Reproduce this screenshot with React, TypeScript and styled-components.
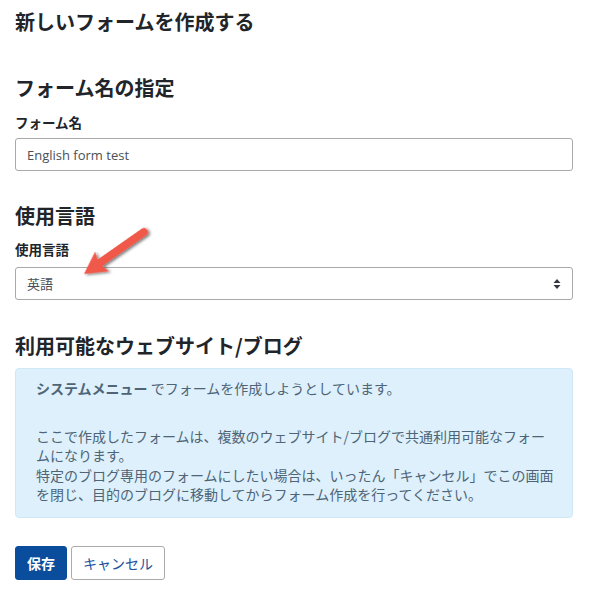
import React from "react";
import styled, { createGlobalStyle } from "styled-components";

const GlobalStyle = createGlobalStyle`
  body {
    margin: 0;
    background: #fff;
    font-family: "Noto Sans CJK JP", "Noto Sans", sans-serif;
    color: #212529;
  }
`;

const Page = styled.div`
  position: relative;
  padding: 10px 18px 20px 15px;
`;

const Title = styled.h1`
  margin: 0;
  font-size: 20px;
  line-height: 24px;
  font-weight: 700;
`;

const Section = styled.section<{ $top: number }>`
  margin-top: ${({ $top }) => $top}px;
`;

const Heading = styled.h2`
  margin: 0;
  font-size: 20px;
  line-height: 24px;
  font-weight: 700;
`;

const Label = styled.label<{ $top: number; $bottom: number }>`
  display: block;
  margin: ${({ $top }) => $top}px 0 ${({ $bottom }) => $bottom}px;
  font-size: 13.5px;
  line-height: 20px;
  font-weight: 700;
`;

const Field = styled.div`
  box-sizing: border-box;
  height: 33px;
  display: flex;
  align-items: center;
  justify-content: space-between;
  padding: 0 11px;
  border: 1px solid #a9a9a9;
  border-radius: 3px;
  font-size: 13px;
  color: #495057;
  font-family: "Open Sans", "Noto Sans CJK JP", sans-serif;
`;

const Alert = styled.div`
  margin-top: 10px;
  box-sizing: border-box;
  padding: 10px 14px 12px 20px;
  background: #ddf0fb;
  border: 1px solid #cfe8f6;
  border-radius: 4px;
  color: #4e6477;
  font-size: 14px;
  line-height: 19.5px;

  p {
    margin: 0;
  }

  p + p {
    margin-top: 28px;
  }

  strong {
    font-weight: 700;
  }
`;

const Line = styled.span`
  display: block;
  white-space: nowrap;
`;

const Actions = styled.div`
  margin-top: 28px;
  display: flex;
  gap: 4px;
`;

const Button = styled.button<{ $primary?: boolean }>`
  box-sizing: border-box;
  height: 34px;
  padding: 0 11px;
  border-radius: 3px;
  font-family: "Noto Sans CJK JP", sans-serif;
  font-size: 14px;
  font-weight: ${({ $primary }) => ($primary ? 700 : 400)};
  color: ${({ $primary }) => ($primary ? "#fff" : "#1d4f9c")};
  background: ${({ $primary }) => ($primary ? "#0a4d9d" : "#fff")};
  border: 1px solid ${({ $primary }) => ($primary ? "#0a4d9d" : "#aaaaaa")};
`;

const Pointer = styled.svg`
  position: absolute;
  left: 76px;
  top: 220px;
  overflow: visible;
`;

const SelectArrows = () => (
  <svg width="8" height="12" viewBox="0 0 8 12">
    <path d="M4 1 L7.5 5 H0.5 Z M4 11 L0.5 7 H7.5 Z" fill="#343a40" />
  </svg>
);

const notice = [
  "ここで作成したフォームは、複数のウェブサイト/ブログで共通利用可能なフォー",
  "ムになります。",
  "特定のブログ専用のフォームにしたい場合は、いったん「キャンセル」でこの画面",
  "を閉じ、目的のブログに移動してからフォーム作成を行ってください。",
];

export default function App() {
  return (
    <>
      <GlobalStyle />
      <Page>
        <Title>新しいフォームを作成する</Title>

        <Section $top={42}>
          <Heading>フォーム名の指定</Heading>
          <Label $top={12} $bottom={6}>フォーム名</Label>
          <Field>English form test</Field>
        </Section>

        <Section $top={33}>
          <Heading>使用言語</Heading>
          <Label $top={11} $bottom={8}>使用言語</Label>
          <Field>
            <span>英語</span>
            <SelectArrows />
          </Field>
        </Section>

        <Section $top={34}>
          <Heading>利用可能なウェブサイト/ブログ</Heading>
          <Alert>
            <p>
              <strong>システムメニュー</strong> でフォームを作成しようとしています。
            </p>
            <p>
              {notice.map((text) => (
                <Line key={text}>{text}</Line>
              ))}
            </p>
          </Alert>
        </Section>

        <Actions>
          <Button $primary>保存</Button>
          <Button>キャンセル</Button>
        </Actions>

        <Pointer width="80" height="60" viewBox="0 0 80 60">
          <defs>
            <filter id="sh" x="-30%" y="-30%" width="160%" height="160%">
              <feDropShadow dx="1" dy="2" stdDeviation="1.5" floodColor="#000" floodOpacity="0.55" />
            </filter>
          </defs>
          <path
            transform="translate(8,54) rotate(-35)"
            d="M0 0 L22 -12 L19.5 -4 L73 -4 A4 4 0 0 1 73 4 L19.5 4 L22 12 Z"
            fill="#f0584a"
            filter="url(#sh)"
          />
        </Pointer>
      </Page>
    </>
  );
}
